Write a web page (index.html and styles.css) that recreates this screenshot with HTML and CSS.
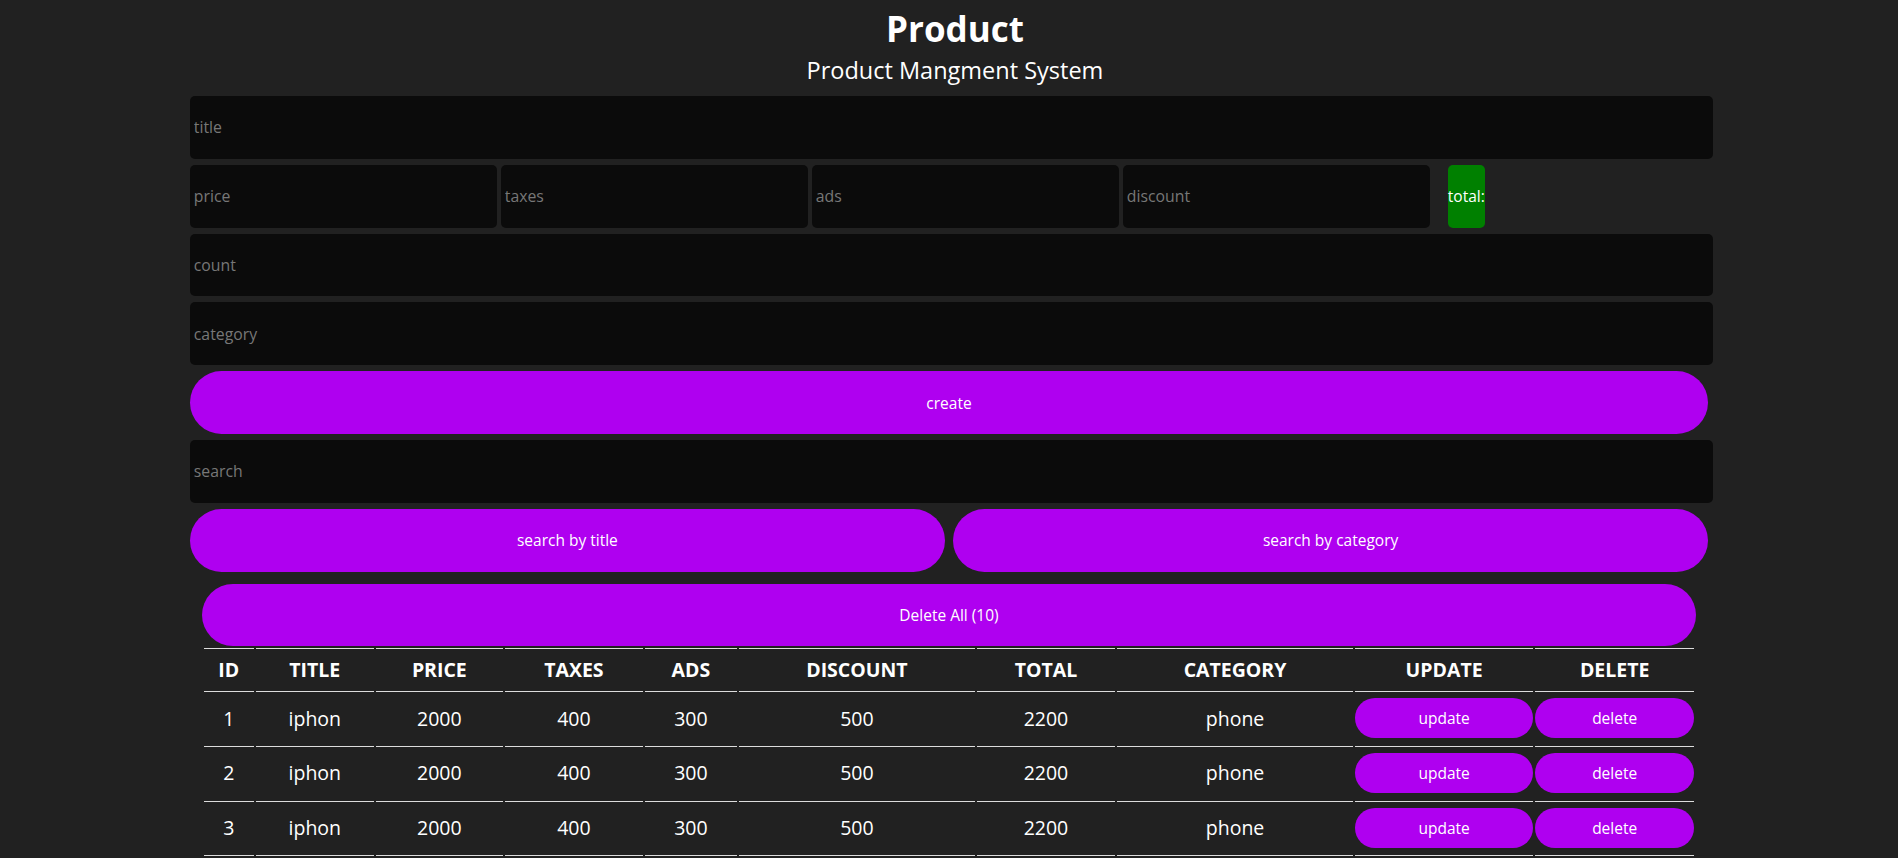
FILE: index.html
```html
<!DOCTYPE html>
<html lang="en">
<head>
<meta charset="utf-8">
<title>Product</title>
<link rel="stylesheet" href="styles.css">
</head>
<body>
<div class="crud">
  <header class="head">
    <h2 class="title">Product</h2>
    <p class="subtitle">Product Mangment System</p>
  </header>
  <div class="form">
    <input class="field" type="text" placeholder="title">
    <div class="price-row">
      <input class="field small" type="number" placeholder="price">
      <input class="field small" type="number" placeholder="taxes">
      <input class="field small" type="number" placeholder="ads">
      <input class="field small" type="number" placeholder="discount">
      <small class="total">total:</small>
    </div>
    <input class="field" type="number" placeholder="count">
    <input class="field" type="text" placeholder="category">
    <button class="btn">create</button>
    <input class="field" type="text" placeholder="search">
    <div class="search-btns">
      <button class="btn">search by title</button>
      <button class="btn">search by category</button>
    </div>
  </div>
  <div class="outputs">
    <button class="btn delete-all">Delete All (10)</button>
    <table class="products">
      <colgroup>
        <col class="c-id"><col class="c-title"><col class="c-price"><col class="c-taxes"><col class="c-ads">
        <col class="c-discount"><col class="c-total"><col class="c-category"><col class="c-update"><col class="c-delete">
      </colgroup>
      <thead>
        <tr><th>ID</th><th>TITLE</th><th>PRICE</th><th>TAXES</th><th>ADS</th><th>DISCOUNT</th><th>TOTAL</th><th>CATEGORY</th><th>UPDATE</th><th>DELETE</th></tr>
      </thead>
      <tbody>
        <tr><td>1</td><td>iphon</td><td>2000</td><td>400</td><td>300</td><td>500</td><td>2200</td><td>phone</td><td><button class="btn row-btn">update</button></td><td><button class="btn row-btn">delete</button></td></tr>
        <tr><td>2</td><td>iphon</td><td>2000</td><td>400</td><td>300</td><td>500</td><td>2200</td><td>phone</td><td><button class="btn row-btn">update</button></td><td><button class="btn row-btn">delete</button></td></tr>
        <tr><td>3</td><td>iphon</td><td>2000</td><td>400</td><td>300</td><td>500</td><td>2200</td><td>phone</td><td><button class="btn row-btn">update</button></td><td><button class="btn row-btn">delete</button></td></tr>
        <tr class="row-next"><td></td><td></td><td></td><td></td><td></td><td></td><td></td><td></td><td></td><td></td></tr>
      </tbody>
    </table>
  </div>
</div>
</body>
</html>
```
FILE: styles.css
```css
* {
  box-sizing: border-box;
  margin: 0;
  padding: 0;
}

html {
  scrollbar-width: none;
}

html::-webkit-scrollbar {
  display: none;
}

body {
  background: #212121;
  color: #fff;
  font-family: "Open Sans", "Noto Sans", sans-serif;
}

.crud {
  width: 80%;
  margin: 0 auto;
}

.head {
  text-align: center;
  padding-top: 7px;
  padding-bottom: 11px;
  padding-left: 12px;
}

.title {
  font-size: 35px;
  line-height: 44px;
  font-weight: 700;
}

.subtitle {
  font-size: 23.5px;
  line-height: 30px;
  margin-top: 4px;
}

.form {
  display: flex;
  flex-direction: column;
  gap: 6px;
}

.field {
  width: calc(100% + 5px);
  height: 62.8px;
  background: #0b0b0b;
  border: none;
  border-radius: 5px;
  padding: 0 4px;
  color: #fff;
  font-family: "Open Sans", "Noto Sans", sans-serif;
  font-size: 15.8px;
  outline: none;
  -moz-appearance: textfield;
}

.field::-webkit-outer-spin-button,
.field::-webkit-inner-spin-button {
  -webkit-appearance: none;
  margin: 0;
}

.field::placeholder {
  color: #777;
}

.price-row {
  display: flex;
  gap: 4px;
  height: 62.8px;
}

.price-row .small {
  flex: 0 0 307px;
  width: 307px;
}

.total {
  margin-left: 14px;
  background: #008000;
  border-radius: 5px;
  display: flex;
  align-items: center;
  font-size: 15.5px;
  color: #fff;
}

.btn {
  width: 100%;
  height: 62.8px;
  border: none;
  border-radius: 32px;
  background: #af00f0;
  color: #fff;
  font-family: "Open Sans", "Noto Sans", sans-serif;
  font-size: 15.5px;
  cursor: pointer;
}

.search-btns {
  display: flex;
  gap: 8px;
}

.outputs {
  padding: 0 12px;
  margin-top: 12px;
}

.delete-all {
  display: block;
}

.products {
  width: 100%;
  border-spacing: 2px;
  table-layout: fixed;
  font-size: 19.5px;
}

.c-id { width: 50px; }
.c-title { width: 118px; }
.c-price { width: 127px; }
.c-taxes { width: 138px; }
.c-ads { width: 92px; }
.c-discount { width: 236px; }
.c-total { width: 138px; }
.c-category { width: 236px; }
.c-update { width: 178px; }
.c-delete { width: 159px; }

.products th {
  height: 41px;
  font-weight: 700;
  border-top: 1px solid #ddd;
  text-align: center;
  vertical-align: middle;
}

.products td {
  height: 52.7px;
  padding: 0;
  border-top: 1px solid #ddd;
  text-align: center;
  vertical-align: middle;
}

.row-btn {
  display: block;
  height: 40px;
  border-radius: 20px;
}
```
